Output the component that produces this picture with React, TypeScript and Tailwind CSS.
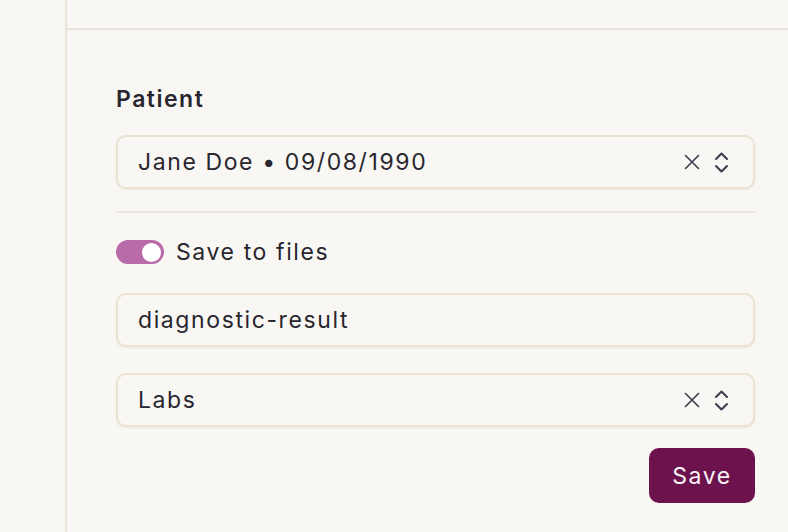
function ClearIcon() {
  return (
    <svg className="h-[16px] w-[16px] text-[#3d3a4c]" viewBox="0 0 16 16" fill="none" stroke="currentColor" strokeWidth={1.6} strokeLinecap="round">
      <path d="M1.5 1.5l13 13M14.5 1.5l-13 13" />
    </svg>
  );
}

function ChevronUpDownIcon() {
  return (
    <svg className="ml-[14px] h-[23px] w-[15px] text-[#3d3a4c]" viewBox="0 0 15 23" fill="none" stroke="currentColor" strokeWidth={2} strokeLinecap="round" strokeLinejoin="round">
      <path d="M2 8l5.5-5.5L13 8" />
      <path d="M2 15l5.5 5.5L13 15" />
    </svg>
  );
}

function SelectBox({ value }: { value: string }) {
  return (
    <div className="flex h-[54px] items-center rounded-[10px] border-2 border-[#ebe2d4] bg-[#f9f7f3] pl-[20px] pr-[24px] shadow-[0_1px_2px_rgba(60,40,10,0.08)]">
      <span className="flex-1 text-[23px] leading-[28px] tracking-[1.6px] text-[#28262e]">{value}</span>
      <ClearIcon />
      <ChevronUpDownIcon />
    </div>
  );
}

export default function App() {
  return (
    <div className="flex h-[532px] w-full bg-[#f9f7f3] font-['Inter',sans-serif]">
      <div className="w-[67px] shrink-0 border-r-2 border-[#ebe3d8]" />
      <div className="flex flex-1 flex-col">
        <div className="h-[30px] shrink-0 border-b-2 border-[#ebe3d8]" />
        <div className="flex flex-col pl-[49px] pr-[33px] pt-[55px]">
          <label className="text-[23px] font-semibold leading-[28px] tracking-[1.5px] text-[#28262e]">Patient</label>
          <div className="mt-[22px]">
            <SelectBox value="Jane Doe • 09/08/1990" />
          </div>
          <div className="mt-[22px] h-[2px] bg-[#ede6dc]" />
          <div className="mt-[25px] flex items-center gap-[12px]">
            <div className="flex h-[24px] w-[48px] items-center justify-end rounded-full bg-[#b96aa8] pr-[3px]">
              <div className="h-[19px] w-[19px] rounded-full bg-white" />
            </div>
            <span className="text-[23px] leading-[28px] tracking-[1.6px] text-[#28262e]">Save to files</span>
          </div>
          <div className="mt-[27px] flex h-[54px] items-center rounded-[10px] border-2 border-[#ebe2d4] bg-[#f9f7f3] px-[20px] shadow-[0_1px_2px_rgba(60,40,10,0.08)]">
            <span className="text-[23px] leading-[28px] tracking-[1.6px] text-[#28262e]">diagnostic-result</span>
          </div>
          <div className="mt-[26px]">
            <SelectBox value="Labs" />
          </div>
          <div className="mt-[21px] flex justify-end">
            <button className="h-[55px] w-[106px] rounded-[10px] bg-[#6c134e] text-[23px] leading-[28px] tracking-[1.6px] text-[#faf4f8]">Save</button>
          </div>
        </div>
      </div>
    </div>
  );
}
